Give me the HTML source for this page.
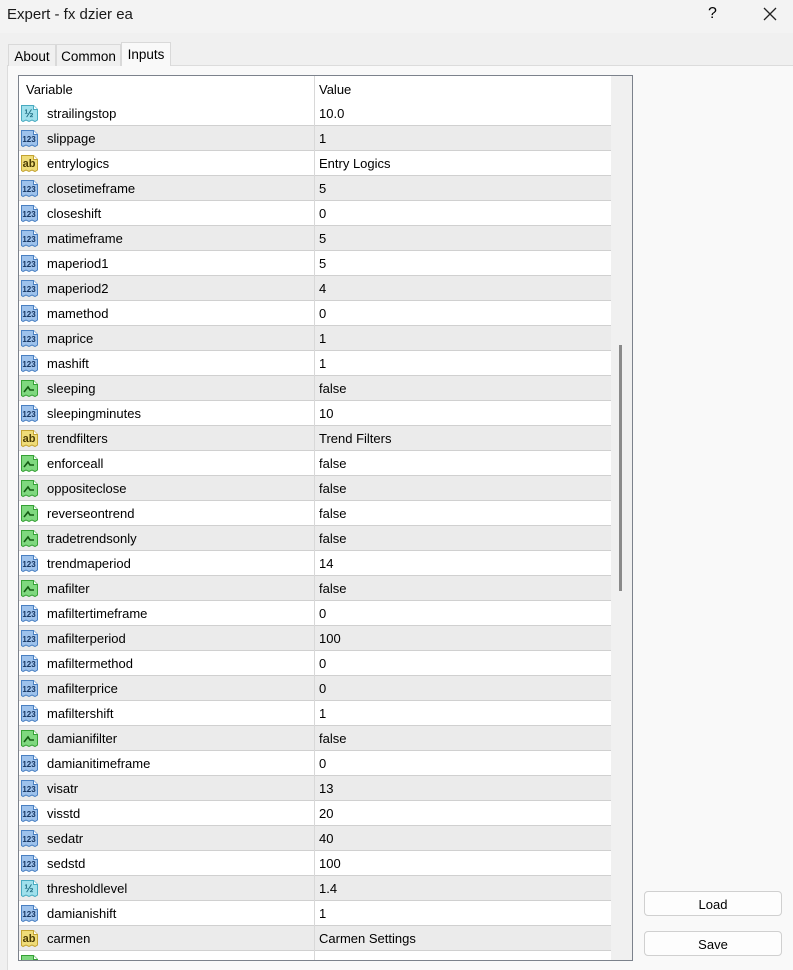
<!DOCTYPE html>
<html><head><meta charset="utf-8"><style>
*{margin:0;padding:0;box-sizing:border-box}
body{width:793px;height:970px;background:#f0f0f0;font-family:"Liberation Sans",Arial,sans-serif;font-size:13px;color:#000;position:relative;overflow:hidden}
.tb{position:absolute;left:0;top:0;width:793px;height:33px;background:#f3f3f3}
.title{position:absolute;left:7px;top:6px;font-size:15px;color:#1a1a1a}
.q{position:absolute;left:708px;top:5px;font-size:16px}
.x{position:absolute;left:762px;top:6px}
.tab{position:absolute;top:44px;height:22px;border:1px solid #d9d9d9;border-bottom:none;background:#f0f0f0;font-size:13.5px;padding:4px 0 0 0;text-align:center}
.panel{position:absolute;left:7px;top:65px;width:786px;height:905px;background:#f9f9f9;border-top:1px solid #dcdcdc;border-left:1px solid #dcdcdc}
.box{position:absolute;left:18px;top:75px;width:615px;height:886px;border:1px solid #7c828c;background:#fff;overflow:hidden}
.hdr{position:absolute;left:0;top:0;width:592px;height:25px;background:#fff}
.hdr span{position:absolute;top:6px}
.row{position:absolute;left:0;width:592px;height:25px;border-bottom:1px solid #d0d0d0}
.row.g{background:#ebebeb}
.row .n{position:absolute;left:28px;top:5px}
.row .v{position:absolute;left:300px;top:5px}
.row svg{position:absolute;left:1px;top:3px}
.vl{position:absolute;left:295px;top:0;width:1px;height:886px;background:#d8d8d8}
.sb{position:absolute;left:592px;top:0;width:21px;height:886px;background:#f0f0f0}
.th{position:absolute;left:8px;top:269px;width:3px;height:246px;background:#8a8a8a}
.btn{position:absolute;left:644px;width:138px;height:25px;border:1px solid #d0d0d0;border-radius:4px;background:#fdfdfd;text-align:center;font-size:13px;padding-top:5px}
</style></head><body>
<div class="tb"></div>
<div class="title">Expert - fx dzier ea</div>
<div class="q">?</div>
<svg class="x" width="16" height="16" viewBox="0 0 16 16"><path d="M2 2L14 14M14 2L2 14" stroke="#222" stroke-width="1.3"/></svg>
<div class="panel"></div>
<div class="tab" style="left:8px;width:48px">About</div>
<div class="tab" style="left:56px;width:65px">Common</div>
<div class="tab" style="left:121px;width:50px;top:42px;height:24px;background:#f9f9f9;padding-top:4px">Inputs</div>
<div class="box">
<div class="hdr"><span style="left:7px">Variable</span><span style="left:300px">Value</span></div>
<div id="rows"></div>
<div class="vl"></div>
<div class="sb"><div class="th"></div></div>
</div>
<div class="btn" style="top:891px">Load</div>
<div class="btn" style="top:931px">Save</div>
<script>
var d=[["d","strailingstop","10.0"],["i","slippage","1"],["s","entrylogics","Entry Logics"],["i","closetimeframe","5"],["i","closeshift","0"],["i","matimeframe","5"],["i","maperiod1","5"],["i","maperiod2","4"],["i","mamethod","0"],["i","maprice","1"],["i","mashift","1"],["b","sleeping","false"],["i","sleepingminutes","10"],["s","trendfilters","Trend Filters"],["b","enforceall","false"],["b","oppositeclose","false"],["b","reverseontrend","false"],["b","tradetrendsonly","false"],["i","trendmaperiod","14"],["b","mafilter","false"],["i","mafiltertimeframe","0"],["i","mafilterperiod","100"],["i","mafiltermethod","0"],["i","mafilterprice","0"],["i","mafiltershift","1"],["b","damianifilter","false"],["i","damianitimeframe","0"],["i","visatr","13"],["i","visstd","20"],["i","sedatr","40"],["i","sedstd","100"],["d","thresholdlevel","1.4"],["i","damianishift","1"],["s","carmen","Carmen Settings"],["b","",""]];
var C={d:["#9fe0ec","#48aac0","½","#1d6b80",11],i:["#9ec2ec","#4a80c2","123","#14335f",8],s:["#efdc78","#c3a332","ab","#4b3c05",11],b:["#7fd87f","#35a035","","",0]};
var h="";
d.forEach(function(r,k){var c=C[r[0]];var ic='<svg width="19" height="19" viewBox="0 0 19 19"><path d="M1.5 1.5H13.5L17.5 5.5V16L15 17.5L12 16L9 17.5L6 16L3 17.5L1.5 16.5Z" fill="'+c[0]+'" stroke="'+c[1]+'"/><path d="M13.5 1.5V5.5H17.5" fill="#fff" stroke="'+c[1]+'"/>'+(r[0]=="b"?'<path d="M4 13L8 8L10 11H14" stroke="#145c14" stroke-width="1.6" fill="none"/>':'<text x="9" y="13" font-size="'+c[4]+'" font-weight="bold" text-anchor="middle" fill="'+c[3]+'" font-family="Liberation Sans">'+c[2]+'</text>')+'</svg>';
h+='<div class="row'+(k%2?' g':'')+'" style="top:'+(25+25*k)+'px">'+ic+'<span class="n">'+r[1]+'</span><span class="v">'+r[2]+'</span></div>';});
document.getElementById("rows").innerHTML=h;
</script>
</body></html>
